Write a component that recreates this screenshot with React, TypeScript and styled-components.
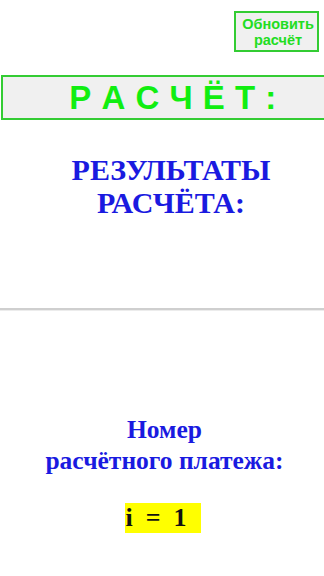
import React from "react";
import styled, { createGlobalStyle } from "styled-components";

const Global = createGlobalStyle`
  html, body { margin: 0; padding: 0; background: #ffffff; overflow-x: hidden; }
  body { font-family: "Liberation Serif", "Times New Roman", serif; }
`;

const Page = styled.div`
  width: 324px;
  overflow: hidden;
  display: flex;
  flex-direction: column;
`;

const TopBar = styled.div`
  display: flex;
  justify-content: flex-end;
  padding: 11px 5px 0 0;
`;

const RefreshButton = styled.button`
  width: 85px;
  height: 41px;
  box-sizing: border-box;
  border: 2px solid #33cc33;
  background: #f0f0f0;
  color: #22dd22;
  font-family: "Liberation Sans", Arial, sans-serif;
  font-weight: bold;
  font-size: 14.5px;
  line-height: 16px;
  padding: 0 0 0 3px;
  cursor: pointer;
`;

const TitleBox = styled.div`
  margin: 23px 0 0 1px;
  width: 344px;
  flex: none;
  height: 45px;
  box-sizing: border-box;
  border: 2px solid #33cc33;
  background: #f0f0f0;
  display: flex;
  align-items: center;
  justify-content: center;
`;

const TitleText = styled.div`
  color: #11ee11;
  font-family: "Liberation Sans", Arial, sans-serif;
  font-weight: bold;
  font-size: 33px;
  letter-spacing: 0.5px;
  white-space: pre;
`;

const Heading = styled.div<{ $size: number; $top: number; $shift: number; $lh: number }>`
  margin-top: ${(p) => p.$top}px;
  padding-left: ${(p) => p.$shift}px;
  text-align: center;
  color: #1a1ae0;
  font-weight: bold;
  font-size: ${(p) => p.$size}px;
  line-height: ${(p) => p.$lh};
`;

const Divider = styled.hr`
  margin: 0;
  border: none;
  height: 2px;
  background: #cfcfcf;
  border-bottom: 1px solid #ececec;
`;

const DividerWrap = styled.div`
  margin-top: 89px;
`;

const IndexRow = styled.div`
  display: flex;
  justify-content: center;
  margin-top: 27px;
`;

const IndexBadge = styled.span`
  background: #ffff00;
  color: #111111;
  font-weight: bold;
  font-size: 26px;
  line-height: 30px;
  padding: 0 14px 0 0;
  margin-left: 2px;
  white-space: pre;
`;

export default function App() {
  return (
    <Page>
      <Global />
      <TopBar>
        <RefreshButton>
          Обновить
          <br />
          расчёт
        </RefreshButton>
      </TopBar>
      <TitleBox>
        <TitleText>Р А С Ч Ё Т :</TitleText>
      </TitleBox>
      <Heading $size={30} $top={33} $shift={18} $lh={1.1}>
        РЕЗУЛЬТАТЫ
        <br />
        РАСЧЁТА:
      </Heading>
      <DividerWrap>
        <Divider />
      </DividerWrap>
      <Heading $size={25.5} $top={104} $shift={5} $lh={1.2}>
        Номер
        <br />
        расчётного платежа:
      </Heading>
      <IndexRow>
        <IndexBadge>{"i  =  1"}</IndexBadge>
      </IndexRow>
    </Page>
  );
}
